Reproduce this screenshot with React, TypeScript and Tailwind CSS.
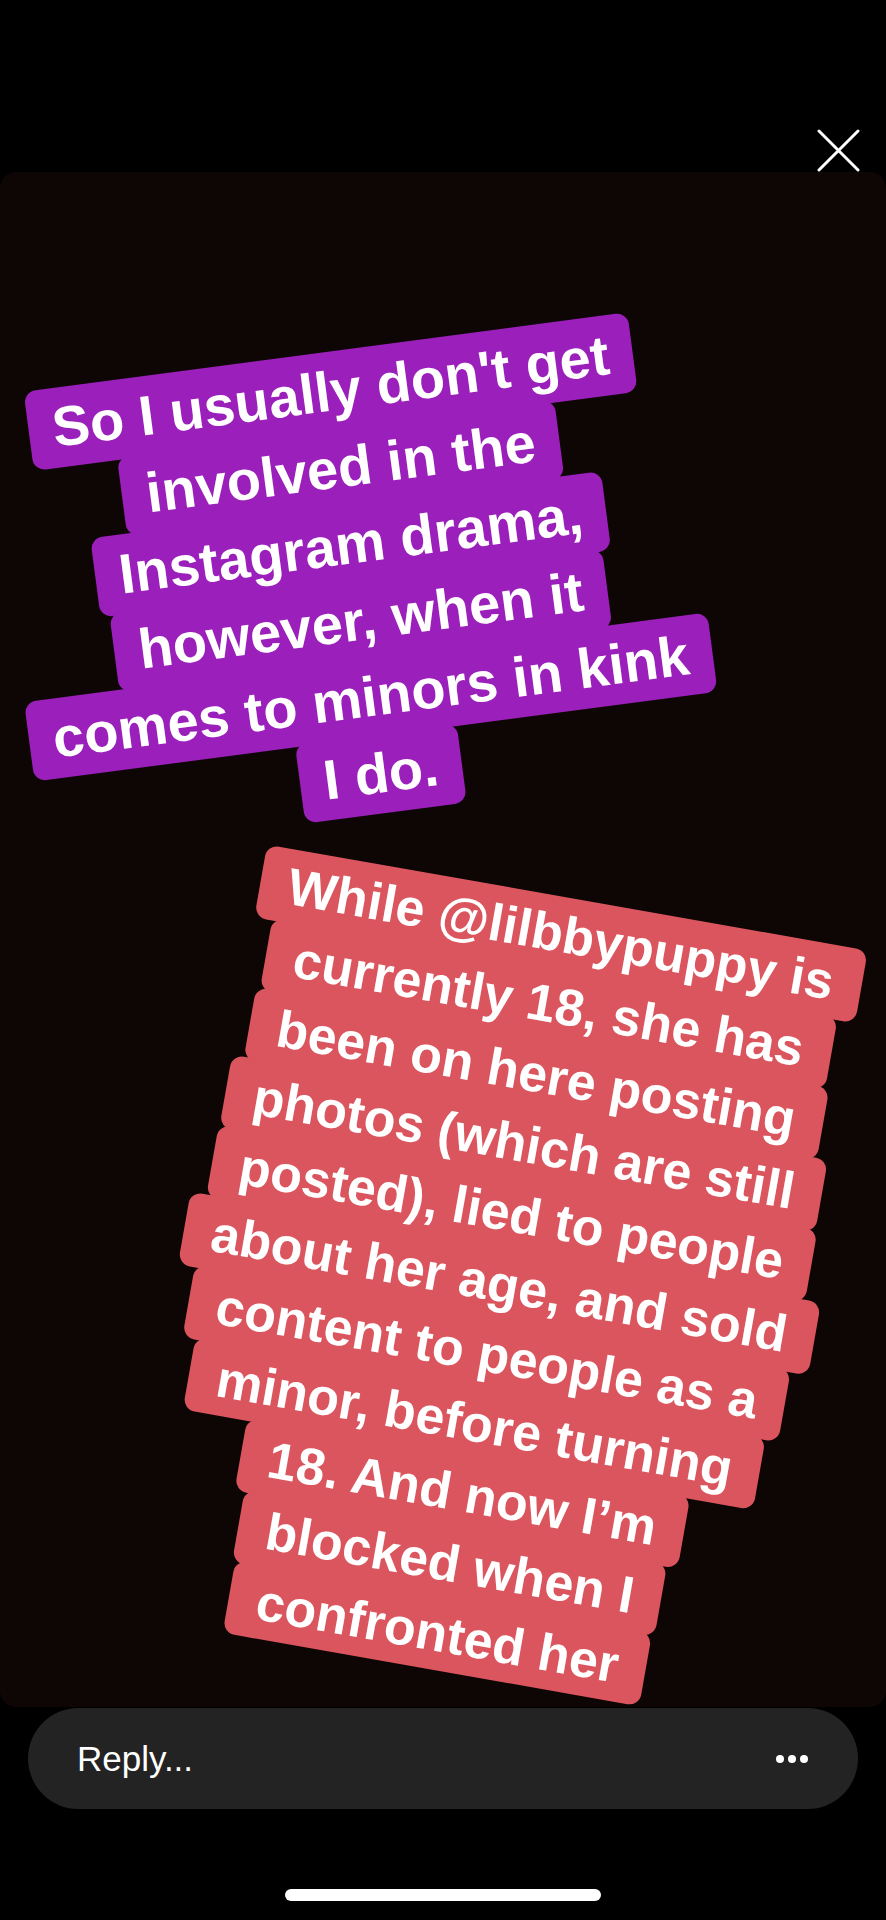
import React from "react";

const purpleLines = [
  "So I usually don't get",
  "involved in the",
  "Instagram drama,",
  "however, when it",
  "comes to minors in kink",
  "I do.",
];

const redLines = [
  "While @lilbbypuppy is",
  "currently 18, she has",
  "been on here posting",
  "photos (which are still",
  "posted), lied to people",
  "about her age, and sold",
  "content to people as a",
  "minor, before turning",
  "18. And now I\u2019m",
  "blocked when I",
  "confronted her",
];

export default function App() {
  return (
    <div
      className="w-[886px] h-[1920px] bg-black flex flex-col overflow-hidden"
      style={{ fontFamily: '"Liberation Sans", Arial, sans-serif' }}
    >
      {/* top area with close icon */}
      <div className="h-[172px] flex items-end justify-end pr-[26px] pb-[0px] shrink-0">
        <svg width="43" height="43" viewBox="0 0 43 43" fill="none">
          <path d="M2 2 L41 41 M41 2 L2 41" stroke="white" strokeWidth="3" strokeLinecap="round" />
        </svg>
      </div>

      {/* story canvas */}
      <div className="relative h-[1535px] shrink-0 rounded-[16px] bg-[#0d0605]">
        {/* purple sticker */}
        <div className="absolute left-[356px] top-[412px] -translate-x-1/2 -translate-y-1/2 -rotate-[7.5deg] flex flex-col items-center">
          {purpleLines.map((l, i) => (
            <div
              key={i}
              className="-mt-[3px] bg-[#9b1fba] rounded-[12px] px-[24px] h-[80px] leading-[80px] text-white font-bold text-[56px] whitespace-nowrap"
            >
              {l}
            </div>
          ))}
        </div>

        {/* red sticker */}
        <div className="absolute left-[499px] top-[1113px] -translate-x-1/2 -translate-y-1/2 rotate-[10deg] flex flex-col items-center">
          {redLines.map((l, i) => (
            <div
              key={i}
              className="-mt-[3px] bg-[#da555d] rounded-[12px] px-[28px] h-[74px] leading-[74px] text-white font-bold text-[52px] whitespace-nowrap"
            >
              {l}
            </div>
          ))}
        </div>
      </div>

      {/* reply bar */}
      <div className="mx-[28px] mt-[1px] h-[101px] shrink-0 rounded-full bg-[#232323] flex items-center justify-between pl-[49px] pr-[50px]">
        <span className="text-white text-[35px] leading-none">Reply...</span>
        <div className="flex gap-[4px]">
          <div className="w-[8px] h-[8px] rounded-full bg-white" />
          <div className="w-[8px] h-[8px] rounded-full bg-white" />
          <div className="w-[8px] h-[8px] rounded-full bg-white" />
        </div>
      </div>

      {/* home indicator */}
      <div className="flex justify-center pt-[80px]">
        <div className="w-[316px] h-[12px] rounded-full bg-white" />
      </div>
    </div>
  );
}
